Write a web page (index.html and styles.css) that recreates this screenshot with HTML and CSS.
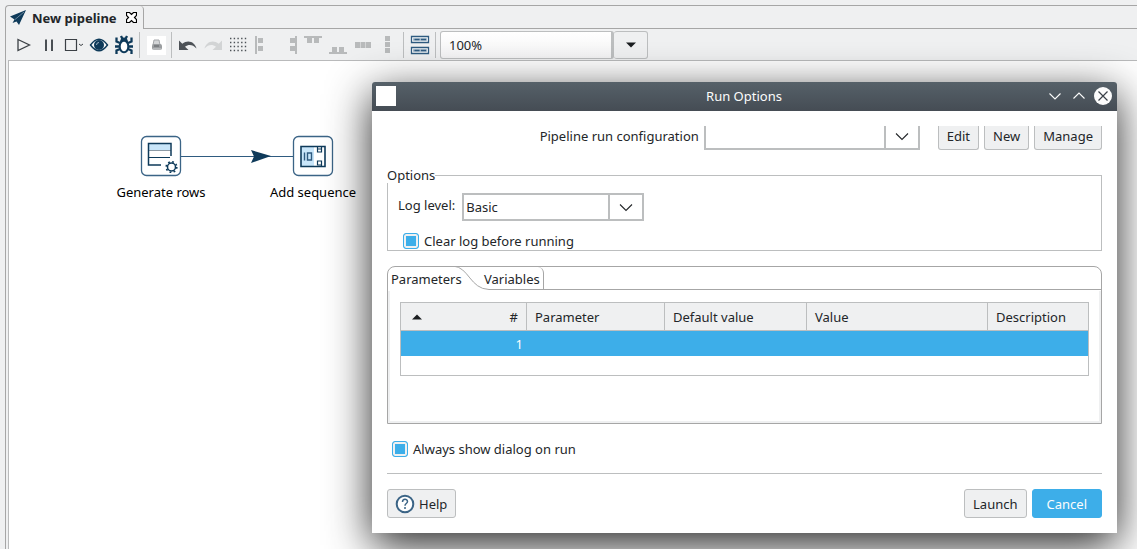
FILE: index.html
```html
<!DOCTYPE html>
<html lang="en">
<head>
<meta charset="utf-8">
<title>New pipeline</title>
<link rel="stylesheet" href="styles.css">
</head>
<body>
<main class="editor">
  <nav class="tabs">
    <div class="tab">
      <svg width="17" height="16" viewBox="0 0 17 16"><path d="M16 0 0 6.500l4.500 3L2.500 13l4-1.500L9 15z" fill="#0e3a5a"/><path d="M14 2 5 9.500" stroke="#7f97aa" stroke-width=".8"/></svg>
      <span>New pipeline</span>
      <button class="tab-close" aria-label="Close tab"><svg width="11" height="11" viewBox="0 0 11 11"><path d="M.5.5h3l2 2 2-2h3v3l-2 2 2 2v3h-3l-2-2-2 2h-3v-3l2-2-2-2z" fill="#fff" stroke="#000" stroke-width="1.200"/></svg></button>
    </div>
    <div class="tabs-rest"></div>
  </nav>
  <div class="toolbar" role="toolbar" aria-label="Pipeline">
    <button class="tool" aria-label="Run"><svg viewBox="0 0 25 25"><path d="M7 7.500 18.500 13 7 18.500z" fill="none" stroke="#3b4045" stroke-width="1.300"/></svg></button>
    <button class="tool" aria-label="Pause"><svg viewBox="0 0 25 25"><path d="M9 7.500h2V19H9zM15 7.500h2V19h-2z" fill="#4a4f54"/></svg></button>
    <button class="tool" aria-label="Stop"><svg viewBox="0 0 25 25"><path d="M4.500 7.500h11v11h-11z" fill="none" stroke="#3b4045" stroke-width="1.200"/><path d="m18 12 2 1.500 2-1.500" fill="none" stroke="#3b4045"/></svg></button>
    <button class="tool" aria-label="Preview"><svg viewBox="0 0 25 25"><path d="M4.500 13Q13 1.500 21.500 13 13 24.500 4.500 13z" fill="#f4f6f8" stroke="#0e3a5a" stroke-width="1.400"/><circle cx="13" cy="13" r="5" fill="#0e3a5a"/><path d="M10.500 13a2.500 2.500 0 0 1 2.500-2.500" fill="none" stroke="#9db4c6"/></svg></button>
    <button class="tool" aria-label="Debug"><svg viewBox="0 0 25 25"><g fill="none" stroke="#0e3a5a" stroke-width="2.300"><path d="M9 11 5.500 9.500V5.500M17 11l3.500-1.500V5.500M8.500 14.500H4M17.500 14.500H22M9 17l-3.500 1.500V22M17 17l3.500 1.500V22M10 4l1.500 3M16 4l-1.500 3"/></g><path d="M9 10a4 4.500 0 0 1 8 0z" fill="#0e3a5a"/><ellipse cx="13" cy="14.500" rx="4.300" ry="5.800" fill="#fff" stroke="#0e3a5a" stroke-width="2"/></svg></button>
    <span class="sep"></span>
    <button class="tool" aria-label="Print"><svg viewBox="0 0 25 25"><path d="M4 4h19v19H4z" fill="#fff"/><path d="M11 8h5l1 5h-7z" fill="#d3d5d7" stroke="#a4a7aa"/><rect x="9" y="12" width="10" height="6" rx="2" fill="#9a9da0"/><path d="M11 14h5" stroke="#5c6064"/><path d="M10 17h8" stroke="#d0d2d4"/></svg></button>
    <span class="sep"></span>
    <button class="tool" aria-label="Undo"><svg viewBox="0 0 25 25"><path d="M4 8.500V18h9.500l-3.500-3.300c3.500-2.500 7.500-2.500 11.500 1.800C20 10 13 7 7.300 11.800z" fill="#4d5257"/></svg></button>
    <button class="tool" aria-label="Redo"><svg viewBox="0 0 25 25"><path d="M22 8.500V18h-9.500l3.500-3.300c-3.500-2.500-7.500-2.500-11.500 1.800C6 10 13 7 18.700 11.800z" fill="#d2d4d5"/></svg></button>
    <button class="tool" aria-label="Snap to grid"><svg viewBox="0 0 25 25"><g stroke="#4d5257" stroke-width="1.300" stroke-dasharray="1.400 2.300"><path d="M5 6.500h17M5 10.500h17M5 14.500h17M5 18.500h17"/></g></svg></button>
    <button class="tool" aria-label="Align left"><svg viewBox="0 0 25 25" fill="#b8babb"><path d="M5 4h2v18H5zM8 6h5v5H8zM8 14h5v5H8z"/></svg></button>
    <button class="tool" aria-label="Align right"><svg viewBox="0 0 25 25" fill="#b8babb"><path d="M20 4h2v18h-2zM15 6h5v5h-5zM15 14h5v5h-5z"/></svg></button>
    <button class="tool" aria-label="Align top"><svg viewBox="0 0 25 25" fill="#b8babb"><path d="M4 4h18v2H4zM7 6h5v5H7zM14 6h5v5h-5z"/></svg></button>
    <button class="tool" aria-label="Align bottom"><svg viewBox="0 0 25 25" fill="#b8babb"><path d="M4 20h18v2H4zM7 15h5v5H7zM14 15h5v5h-5z"/></svg></button>
    <button class="tool" aria-label="Distribute horizontally"><svg viewBox="0 0 25 25" fill="#b8babb"><path d="M5 10h5v6H5zM10.500 10h5v6h-5zM16 10h5v6h-5z"/></svg></button>
    <button class="tool" aria-label="Distribute vertically"><svg viewBox="0 0 25 25" fill="#b8babb"><path d="M10 4h5v5h-5zM10 10h5v5h-5zM10 16h5v5h-5z"/></svg></button>
    <span class="sep"></span>
    <button class="tool" aria-label="Show results"><svg viewBox="0 0 25 25"><path d="M4.500 4.500h17v6h-17zM4.500 15.500h17v6h-17z" fill="#fff" stroke="#2f5b80" stroke-width="1.300"/><path d="M6 7.500h14M6 18.500h14" stroke="#9db4c6" stroke-width="2.600"/><path d="M7.500 7.500h5M14 7.500h5M7.500 18.500h5M14 18.500h5" stroke="#2f5b80" stroke-width="1.400"/></svg></button>
    <span class="sep"></span>
    <div class="zoom">
      <input type="text" value="100%" aria-label="Zoom level">
      <button aria-label="Choose zoom level"><svg width="10" height="6" viewBox="0 0 10 6"><path d="M0 .5h10L5 5.500z" fill="#1b1e20"/></svg></button>
    </div>
  </div>
  <section class="canvas" aria-label="Canvas">
    <svg class="hop" width="112" height="16" viewBox="0 0 112 16"><path d="M0 8.500h112" stroke="#2f5b80"/><path d="m70 2 20 6-20 7 3-6.500z" fill="#0e3a5a"/></svg>
    <figure class="node generate">
      <svg width="42" height="42" viewBox="0 0 42 42"><rect x="1.500" y="1.500" width="39" height="39" rx="5" fill="#fff" stroke="#3b6486" stroke-width="1.300"/><path d="M9 8.500h21v7H9z" fill="#c9e6fa"/><path d="M9 15.500h22" stroke="#8e9ba6"/><path d="M8 22.500h22" stroke="#0e3a5a"/><path d="M31 21V8.500H8.500v21.500H21" fill="none" stroke="#0e3a5a" stroke-width="1.500"/><circle cx="31.500" cy="32" r="4" fill="#fff" stroke="#0e3a5a" stroke-width="1.500"/><circle cx="31.500" cy="32" r="5.300" fill="none" stroke="#0e3a5a" stroke-width="1.600" stroke-dasharray="1.800 2.363"/></svg>
      <figcaption>Generate rows</figcaption>
    </figure>
    <figure class="node sequence">
      <svg width="42" height="42" viewBox="0 0 42 42"><rect x="1.500" y="1.500" width="39" height="39" rx="5" fill="#fff" stroke="#3b6486" stroke-width="1.300"/><path d="M9 11.500h13v20H9z" fill="#c9e6fa"/><path d="M9 11.500h24v20H9z" fill="none" stroke="#0e3a5a" stroke-width="1.600"/><path d="M12.500 17.500v8M15.500 18h4v7h-4z" fill="none" stroke="#2f5b80" stroke-width="1.400"/><path d="M25.500 11v6h4v-6M25.500 14h4M29.500 32v-6h-4v4h4" fill="none" stroke="#0e3a5a" stroke-width="1.200"/></svg>
      <figcaption>Add sequence</figcaption>
    </figure>
  </section>
</main>

<section class="dialog" role="dialog" aria-labelledby="dialog-title">
  <header class="titlebar">
    <span class="app-icon"></span>
    <h1 id="dialog-title">Run Options</h1>
    <div class="window-buttons">
      <button aria-label="Minimize"><svg width="18" height="18" viewBox="0 0 18 18"><path d="m3.500 6.500 5.500 5.500 5.500-5.500" fill="none" stroke="#fcfcfc" stroke-width="1.100"/></svg></button>
      <button aria-label="Maximize"><svg width="18" height="18" viewBox="0 0 18 18"><path d="M3.500 11.500 9 6l5.500 5.500" fill="none" stroke="#fcfcfc" stroke-width="1.100"/></svg></button>
      <button aria-label="Close"><svg width="18" height="18" viewBox="0 0 18 18"><circle cx="9" cy="9" r="9" fill="#fcfcfc"/><path d="m4.500 4.500 9 9m0-9-9 9" stroke="#3a4148" stroke-width="1.200"/></svg></button>
    </div>
  </header>
  <form class="dialog-body">
    <div class="config-row">
      <label for="config">Pipeline run configuration</label>
      <div class="select config-select"><select id="config"><option></option></select><svg viewBox="0 0 14 9"><path d="m1 1.500 6 6 6-6"/></svg></div>
      <div class="config-buttons">
        <button type="button" class="btn">Edit</button>
        <button type="button" class="btn">New</button>
        <button type="button" class="btn">Manage</button>
      </div>
    </div>
    <fieldset class="options">
      <legend>Options</legend>
      <div class="log-row">
        <label for="level">Log level:</label>
        <div class="select log-select"><select id="level"><option>Basic</option></select><svg viewBox="0 0 14 9"><path d="m1 1.500 6 6 6-6"/></svg></div>
      </div>
      <label class="check clear-log"><input type="checkbox" checked>Clear log before running</label>
    </fieldset>
    <div class="folder">
      <div class="folder-tabs" role="tablist">
        <button type="button" class="folder-tab active" role="tab" aria-selected="true">Parameters</button>
        <button type="button" class="folder-tab variables" role="tab" aria-selected="false"><svg class="curve" width="40" height="24" viewBox="0 0 40 24"><path d="M0 0c16 1 17 23 36 23.500h4" fill="none" stroke="#a6a6a6"/></svg>Variables</button>
        <span class="folder-rest"></span>
      </div>
      <div class="panel">
        <div class="grid">
          <table>
            <colgroup><col class="c-num"><col class="c-param"><col class="c-default"><col class="c-value"><col></colgroup>
            <thead><tr>
              <th class="num"><div><svg width="10" height="6" viewBox="0 0 10 6"><path d="M0 5.500h10L5 .5z" fill="#1b1e20"/></svg><span>#</span></div></th>
              <th>Parameter</th><th>Default value</th><th>Value</th><th>Description</th>
            </tr></thead>
            <tbody><tr><td class="num">1</td><td></td><td></td><td></td><td></td></tr></tbody>
          </table>
        </div>
      </div>
    </div>
    <label class="check always"><input type="checkbox" checked>Always show dialog on run</label>
    <hr>
    <footer class="actions">
      <button type="button" class="btn help"><svg width="20" height="20" viewBox="0 0 20 20"><circle cx="10" cy="10" r="8.300" fill="#fff" stroke="#3b6486" stroke-width="2"/><path d="M7.500 8c0-3.500 5-3.500 5-.5 0 2-2.500 2-2.500 4.200" fill="none" stroke="#3b6486" stroke-width="1.500"/><circle cx="10" cy="14" r="1" fill="#3b6486"/></svg>Help</button>
      <button type="button" class="btn launch">Launch</button>
      <button type="button" class="btn primary">Cancel</button>
    </footer>
  </form>
</section>
</body>
</html>
```
FILE: styles.css
```css
* { box-sizing: border-box; }

body {
  margin: 0;
  min-height: 100vh;
  display: flex;
  overflow: hidden;
  background: #eff0f1;
  color: #232629;
  font: 13px/18px "Noto Sans", sans-serif;
}

button, input, select { font: inherit; color: inherit; }
button { cursor: pointer; }
svg { display: block; flex: none; }

.editor {
  flex: 1;
  display: flex;
  flex-direction: column;
  margin: 5px 0 0 5px;
  border: solid #a6a6a6;
  border-width: 1px 0 0 1px;
  border-top-left-radius: 4px;
}

.tabs { display: flex; height: 23px; }
.tab {
  display: flex;
  align-items: center;
  gap: 5px;
  padding: 0 6px 0 4px;
  border-right: 1px solid #a6a6a6;
  border-top-right-radius: 4px;
  font-weight: bold;
}
.tab-close { padding: 0; border: 0; background: none; margin-left: 4px; }
.tabs-rest { flex: 1; border-bottom: 1px solid #a6a6a6; }

.toolbar {
  display: flex;
  align-items: center;
  height: 32px;
  margin-left: 2px;
  padding-left: 3px;
  border-bottom: 1px solid #b9babb;
}
.tool { width: 25px; height: 25px; padding: 0; border: 0; background: none; }
.tool svg { width: 25px; height: 25px; }
.sep { width: 7px; height: 26px; background: linear-gradient(#bcbebf, #bcbebf) center / 1px 100% no-repeat; }

.zoom { display: flex; height: 28px; margin-left: 1px; }
.zoom input {
  width: 174px;
  padding: 0 8px;
  border: 1px solid #bcbebf;
  border-right-width: 3px;
  border-radius: 3px;
  background: linear-gradient(#fff, #f3f3f4);
}
.zoom button {
  display: grid;
  place-items: center;
  width: 34px;
  padding: 0;
  border: 1px solid #bcbebf;
  border-left: 0;
  border-radius: 3px;
  background: #eff0f1;
}

.canvas {
  position: relative;
  flex: 1;
  margin-left: 2px;
  border-left: 1px solid #b9babb;
  background: #fff;
}
.hop { position: absolute; left: 172px; top: 87px; }
.node {
  position: absolute;
  top: 74px;
  width: 120px;
  margin: 0;
  display: flex;
  flex-direction: column;
  align-items: center;
  gap: 6px;
  color: #000;
}
.generate { left: 92px; }
.sequence { left: 244px; }

.dialog {
  position: absolute;
  top: 82px;
  left: 372px;
  right: 20px;
  border-radius: 3px 3px 0 0;
  background: #fff;
  box-shadow: 0 12px 44px rgba(0, 0, 0, .85);
}
.titlebar {
  display: grid;
  grid-template-columns: 1fr auto 1fr;
  align-items: center;
  height: 29px;
  padding: 0 5px 1px 4px;
  border-radius: 3px 3px 0 0;
  background: linear-gradient(#566169, #454c54);
  color: #fcfcfc;
}
.titlebar h1 { margin: 0; font-size: 13px; font-weight: normal; }
.app-icon { width: 20px; height: 20px; background: #fff; }
.window-buttons { display: flex; justify-content: flex-end; gap: 6px; }
.window-buttons button { padding: 0; border: 0; background: none; }

.dialog-body { display: flex; flex-direction: column; padding: 15px; }

.btn {
  height: 29px;
  padding: 0 8px;
  border: 1px solid #bcbebf;
  border-radius: 3px;
  background: #eff0f1;
}
.select { position: relative; }
.select select {
  appearance: none;
  width: 100%;
  height: 100%;
  padding: 0 36px 0 2px;
  border: 2px solid #bcbebf;
  border-radius: 0;
  background: linear-gradient(#bcbebf, #bcbebf) right 32px top / 2px 100% no-repeat #fff;
}
.select svg {
  position: absolute;
  right: 11px;
  top: 50%;
  width: 14px;
  height: 9px;
  margin-top: -4px;
  fill: none;
  stroke: #232629;
  stroke-width: 1.1;
  pointer-events: none;
}

.config-row { display: flex; justify-content: flex-end; height: 24px; }
.config-row label { margin: 1px 5px 0 0; }
.config-select { width: 216px; }
.config-select select { border-top: 0; }
.config-select svg { margin-top: -6px; }
.config-buttons { display: flex; gap: 5px; margin-left: 18px; }
.config-buttons .btn { height: 24px; padding-bottom: 3px; border-top: 0; border-radius: 0 0 3px 3px; }

.options { margin: 17px 0 0; padding: 10px 10px 0; border: 1px solid #bcbebf; }
.options legend { height: 16px; margin-left: -11px; padding: 0; line-height: 16px; background: #fff; }
.log-row { display: flex; gap: 7px; }
.log-row label { padding-top: 3px; }
.log-select { width: 182px; height: 28px; }

.check { display: flex; align-items: center; gap: 5px; }
.check input {
  appearance: none;
  width: 16px;
  height: 16px;
  margin: 0;
  border: 1px solid #3daee9;
  border-radius: 3px;
  background: #3daee9;
  box-shadow: inset 0 0 0 2px #eff0f1;
}
.clear-log { margin: 11px 0 0 5px; }

.folder {
  margin-top: 15px;
  border: 1px solid #a6a6a6;
  border-radius: 8px 8px 0 0;
}
.folder-tabs { display: flex; height: 23px; }
.folder-tab { padding: 2px 3px; border: 0; background: none; }
.folder-tab.active { width: 79px; text-align: left; }
.variables {
  position: relative;
  padding-left: 17px;
  border-right: 1px solid #a6a6a6;
  border-top-right-radius: 6px;
  background: linear-gradient(#a6a6a6, #a6a6a6) right bottom / 54px 1px no-repeat;
}
.curve { position: absolute; left: -14px; top: -1px; }
.folder-rest { flex: 1; border-bottom: 1px solid #a6a6a6; }
.panel { margin-top: 1px; padding: 11px 10px 45px; border: 2px solid #eff0f1; border-top: 0; }

.grid { height: 74px; border: 1px solid #bcbebf; }
table { width: 100%; border-spacing: 0; table-layout: fixed; }
th {
  height: 28px;
  padding: 0 8px;
  border: solid #bcbebf;
  border-width: 0 1px 1px 0;
  background: #eff0f1;
  font-weight: normal;
  text-align: left;
}
th:last-child { border-right: 0; }
th.num div { display: flex; align-items: center; justify-content: space-between; padding-left: 3px; }
td { height: 25px; padding: 0 4px; background: #3daee9; color: #fcfcfc; }
td.num { text-align: right; }
.c-num { width: 126px; }
.c-param { width: 138px; }
.c-default { width: 142px; }
.c-value { width: 181px; }

.always { margin: 16px 0 0 5px; }
hr { width: 100%; margin: 15px 0; border: 0; border-top: 1px solid #bcbebf; }
.actions { display: flex; gap: 5px; }
.help { display: flex; align-items: center; gap: 4px; padding: 0 8px 0 7px; }
.launch { margin-left: auto; }
.primary { padding: 0 14px; border-color: #3daee9; background: #3daee9; color: #fcfcfc; }
```
